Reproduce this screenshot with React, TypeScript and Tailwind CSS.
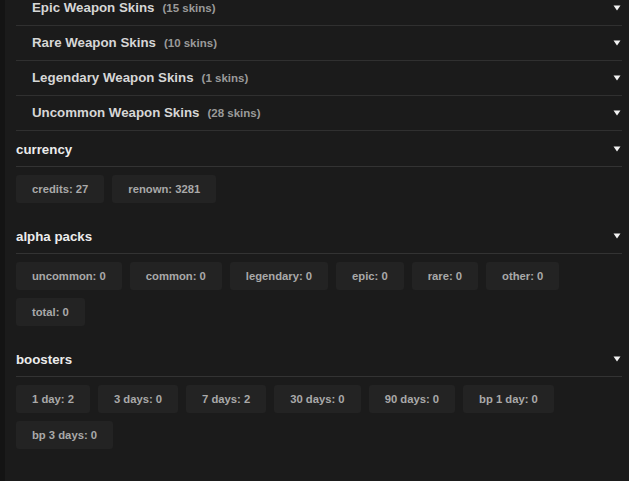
import React from "react";

const Arrow = () => (
  <svg width="8" height="6" viewBox="0 0 8 6" className="shrink-0">
    <path d="M0.5 0.5 L7.5 0.5 L4 5.5 Z" fill="#f2f2f2" />
  </svg>
);

const skins = [
  { name: "Epic Weapon Skins", count: "(15 skins)" },
  { name: "Rare Weapon Skins", count: "(10 skins)" },
  { name: "Legendary Weapon Skins", count: "(1 skins)" },
  { name: "Uncommon Weapon Skins", count: "(28 skins)" },
];

const Chip = ({ label }: { label: string }) => (
  <div className="h-[28px] px-4 flex items-center bg-[#232323] rounded-[3px] text-[11.25px] font-bold text-[#a9a9a9] whitespace-nowrap">
    {label}
  </div>
);

const Section = ({ title, items, first }: { title: string; items: string[]; first?: boolean }) => (
  <div className={first ? "mt-[1px]" : "mt-4"}>
    <div className="h-[35px] flex items-center justify-between border-b border-[#333333] pr-[1px]">
      <span className="text-[13.3px] font-bold text-[#ececec] pt-[1px]">{title}</span>
      <Arrow />
    </div>
    <div className="flex flex-wrap gap-2 mt-2">
      {items.map((i) => (
        <Chip key={i} label={i} />
      ))}
    </div>
  </div>
);

export default function App() {
  return (
    <div
      className="w-[629px] h-[481px] overflow-hidden bg-[#1b1b1b] flex"
      style={{ fontFamily: '"Liberation Sans", Arial, sans-serif' }}
    >
      <div className="w-[5px] shrink-0 bg-[#141414]" />
      <div className="flex-1 ml-[11px] mr-[7px] mt-[-9px]">
        <div>
          {skins.map((s) => (
            <div
              key={s.name}
              className="h-[35px] flex items-center justify-between border-b border-[#303030] pl-4 pr-[1px]"
            >
              <div className="flex items-baseline">
                <span className="text-[13.3px] font-bold text-[#d6d6d6]">{s.name}</span>
                <span className="ml-2 text-[11.5px] font-bold text-[#9a9a9a]">{s.count}</span>
              </div>
              <Arrow />
            </div>
          ))}
        </div>
        <Section first title="currency" items={["credits: 27", "renown: 3281"]} />
        <Section
          title="alpha packs"
          items={["uncommon: 0", "common: 0", "legendary: 0", "epic: 0", "rare: 0", "other: 0", "total: 0"]}
        />
        <Section
          title="boosters"
          items={["1 day: 2", "3 days: 0", "7 days: 2", "30 days: 0", "90 days: 0", "bp 1 day: 0", "bp 3 days: 0"]}
        />
      </div>
    </div>
  );
}
